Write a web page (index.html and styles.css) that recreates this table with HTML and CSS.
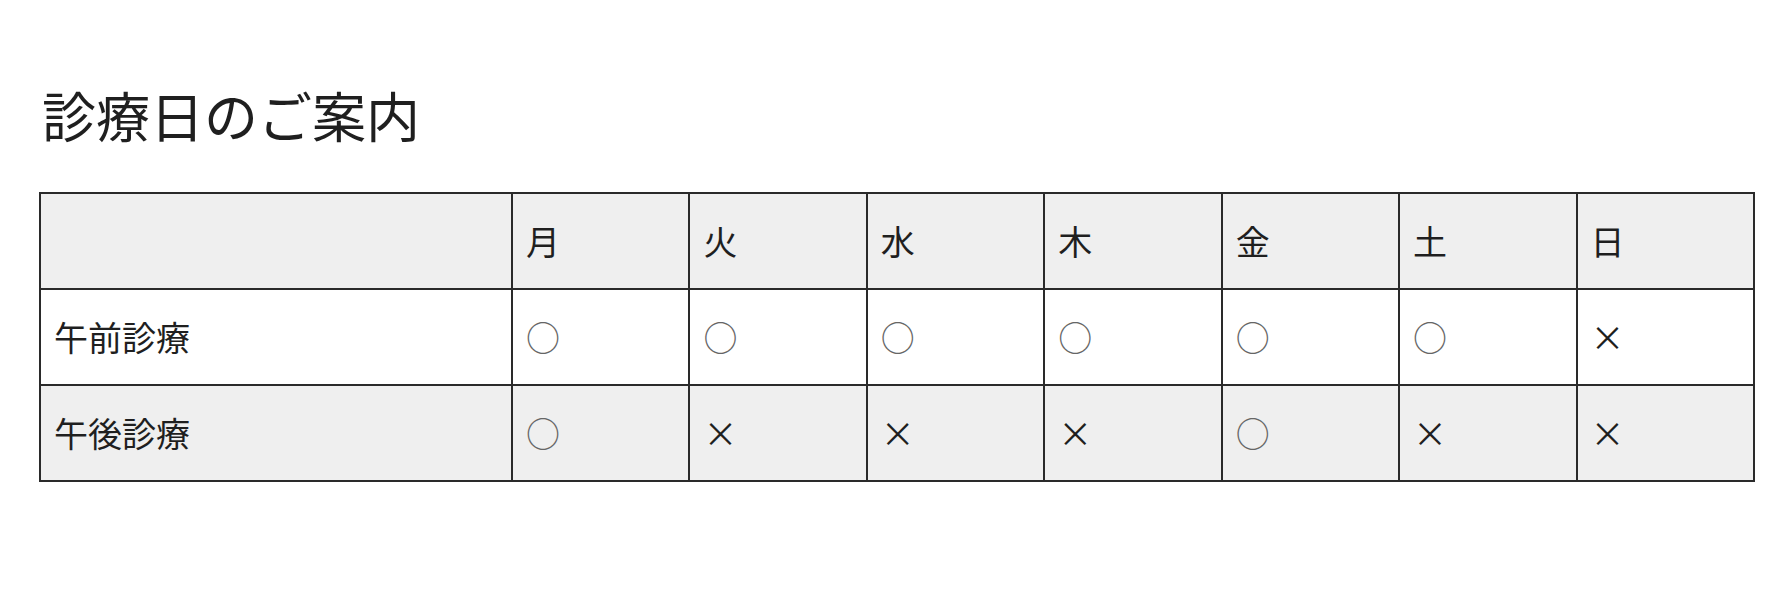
FILE: index.html
```html
<!DOCTYPE html>
<html lang="ja">
<head>
<meta charset="utf-8">
<title>診療日のご案内</title>
<link rel="stylesheet" href="styles.css">
</head>
<body>
<main class="page">
  <h1 class="title">診療日のご案内</h1>
  <table class="schedule">
    <colgroup>
      <col class="col-label">
      <col class="col-day"><col class="col-day"><col class="col-day"><col class="col-day"><col class="col-day"><col class="col-day"><col class="col-day">
    </colgroup>
    <thead>
      <tr class="row-shade">
        <th></th>
        <th>月</th><th>火</th><th>水</th><th>木</th><th>金</th><th>土</th><th>日</th>
      </tr>
    </thead>
    <tbody>
      <tr>
        <td>午前診療</td>
        <td class="yes">○</td><td class="yes">○</td><td class="yes">○</td><td class="yes">○</td><td class="yes">○</td><td class="yes">○</td><td class="no">×</td>
      </tr>
      <tr class="row-shade">
        <td>午後診療</td>
        <td class="yes">○</td><td class="no">×</td><td class="no">×</td><td class="no">×</td><td class="yes">○</td><td class="no">×</td><td class="no">×</td>
      </tr>
    </tbody>
  </table>
</main>
</body>
</html>
```

FILE: styles.css
```css
html, body {
  margin: 0;
  padding: 0;
  background: #ffffff;
}

body {
  font-family: "Noto Sans CJK JP", "Noto Sans", sans-serif;
  color: #1f1f1f;
}

.page {
  padding: 88px 24px 0 39px;
}

.title {
  margin: 0 0 50px 3px;
  font-size: 54px;
  font-weight: 400;
  line-height: 1;
}

.schedule {
  width: 1716px;
  border-collapse: collapse;
  table-layout: fixed;
  border: 2px solid #2a2a2a;
}

.col-label {
  width: 472px;
}

.schedule tr {
  height: 96px;
}

.schedule th,
.schedule td {
  border: 2px solid #2a2a2a;
  padding: 0 13px;
  text-align: left;
  vertical-align: middle;
  font-size: 34px;
  font-weight: 400;
  line-height: 1;
}

.row-shade {
  background: #efefef;
}

.yes {
  color: #666666;
}

.no {
  color: #1f1f1f;
}
```
